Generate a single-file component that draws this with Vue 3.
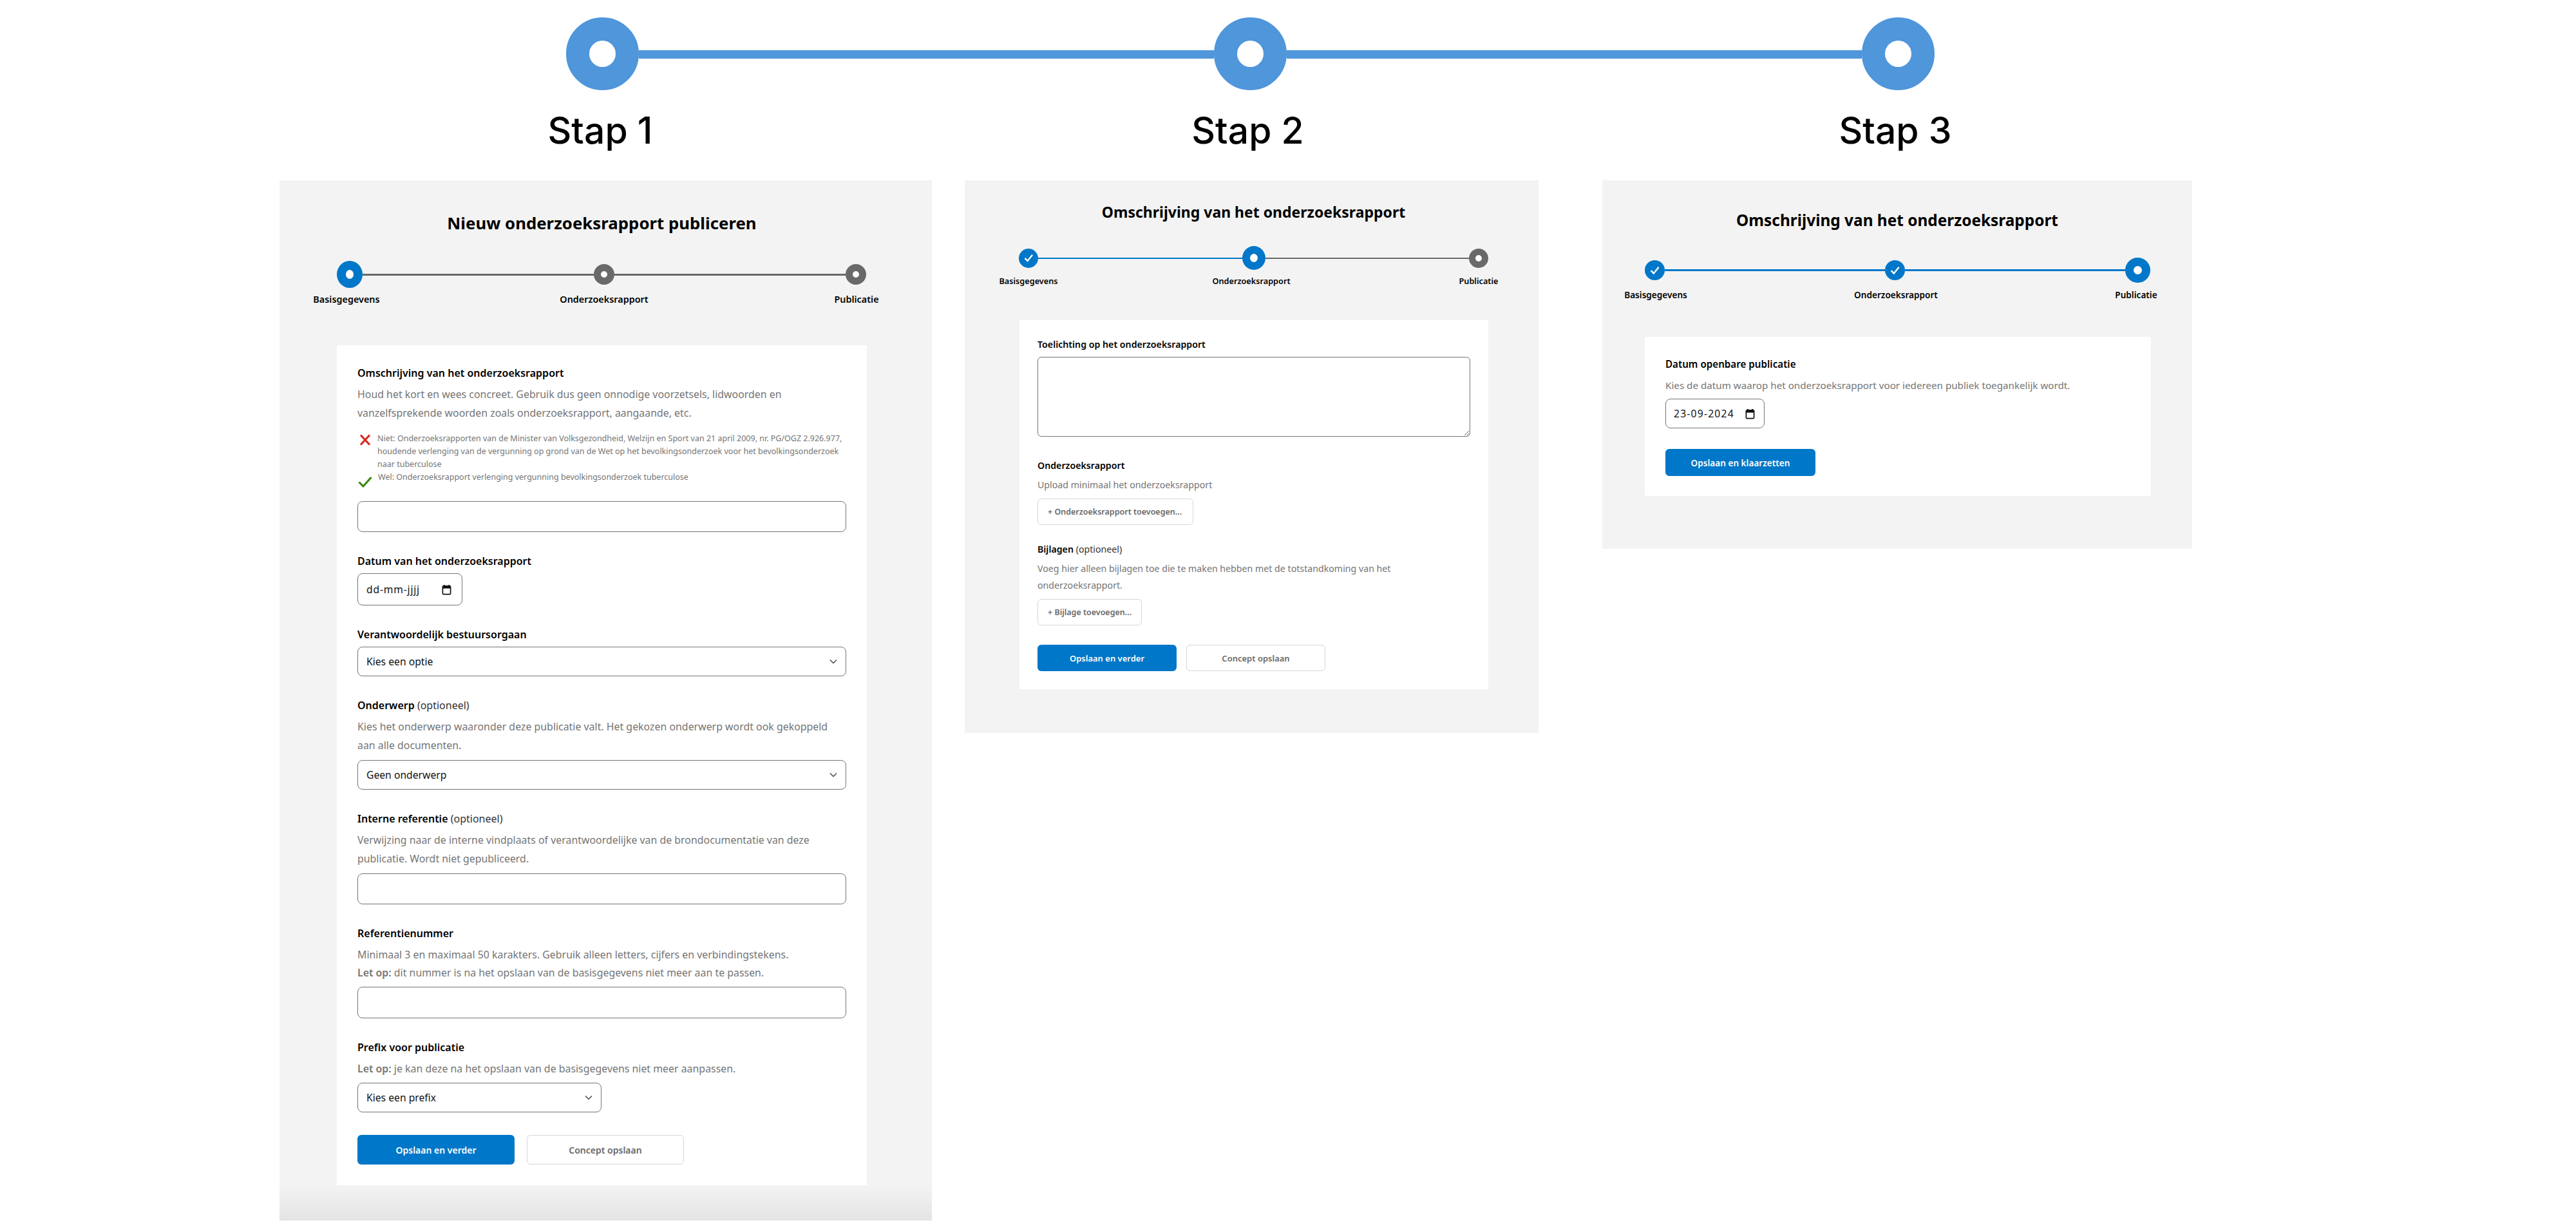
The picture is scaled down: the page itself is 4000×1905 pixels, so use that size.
<script setup>
const top = ['Stap 1', 'Stap 2', 'Stap 3']
</script>

<template>
  <div class="page">
    <header class="overview">
      <div class="track">
        <template v-for="(s, i) in top" :key="s">
          <span class="big-dot"></span>
          <span v-if="i < 2" class="big-line"></span>
        </template>
      </div>
      <div class="track-labels">
        <span v-for="s in top" :key="s" class="big-label">{{ s }}</span>
      </div>
    </header>

    <main class="panels">
      <!-- Stap 1 -->
      <section class="panel p1">
        <h1>Nieuw onderzoeksrapport publiceren</h1>
        <div class="steps">
          <span class="dot active"></span><span class="line"></span>
          <span class="dot todo"></span><span class="line"></span>
          <span class="dot todo"></span>
        </div>
        <div class="step-labels">
          <span>Basisgegevens</span><span>Onderzoeksrapport</span><span>Publicatie</span>
        </div>
        <div class="card">
          <div class="field first">
            <label>Omschrijving van het onderzoeksrapport</label>
            <p class="desc">Houd het kort en wees concreet. Gebruik dus geen onnodige voorzetsels, lidwoorden en<br>vanzelfsprekende woorden zoals onderzoeksrapport, aangaande, etc.</p>
            <div class="example niet">
              <svg viewBox="0 0 18 18" width="18" height="18"><path d="M2 1.5 16 16.5M16 1.5 2 16.5" fill="none" stroke="#d52b1e" stroke-width="3.2"/></svg>
              <span>Niet: Onderzoeksrapporten van de Minister van Volksgezondheid, Welzijn en Sport van 21 april 2009, nr. PG/OGZ 2.926.977,<br>houdende verlenging van de vergunning op grond van de Wet op het bevolkingsonderzoek voor het bevolkingsonderzoek<br>naar tuberculose</span>
            </div>
            <div class="example wel">
              <svg viewBox="0 0 22 18" width="22" height="18"><path d="M1.5 9.5 8 16 20.5 2" fill="none" stroke="#39870c" stroke-width="3"/></svg>
              <span>Wel: Onderzoeksrapport verlenging vergunning bevolkingsonderzoek tuberculose</span>
            </div>
            <input class="input omschr" type="text" />
          </div>
          <div class="field">
            <label>Datum van het onderzoeksrapport</label>
            <div class="date d1">
              <span>dd-mm-jjjj</span>
              <svg viewBox="0 0 16 18" width="15" height="17"><path d="M4 1v3M12 1v3" stroke="#111" stroke-width="2"/><rect x="1.5" y="3" width="13" height="13.5" rx="1.5" fill="none" stroke="#111" stroke-width="1.8"/><rect x="1.5" y="3" width="13" height="4" fill="#111"/></svg>
            </div>
          </div>
          <div class="field">
            <label>Verantwoordelijk bestuursorgaan</label>
            <div class="select">
              <span>Kies een optie</span>
              <svg viewBox="0 0 12 8" width="12" height="8"><path d="M1 1.5 6 6.5 11 1.5" fill="none" stroke="#444" stroke-width="1.4"/></svg>
            </div>
          </div>
          <div class="field">
            <label>Onderwerp <em>(optioneel)</em></label>
            <p class="desc">Kies het onderwerp waaronder deze publicatie valt. Het gekozen onderwerp wordt ook gekoppeld<br>aan alle documenten.</p>
            <div class="select after-desc">
              <span>Geen onderwerp</span>
              <svg viewBox="0 0 12 8" width="12" height="8"><path d="M1 1.5 6 6.5 11 1.5" fill="none" stroke="#444" stroke-width="1.4"/></svg>
            </div>
          </div>
          <div class="field">
            <label>Interne referentie <em>(optioneel)</em></label>
            <p class="desc">Verwijzing naar de interne vindplaats of verantwoordelijke van de brondocumentatie van deze<br>publicatie. Wordt niet gepubliceerd.</p>
            <input class="input after-desc" type="text" />
          </div>
          <div class="field">
            <label>Referentienummer</label>
            <p class="desc tight">Minimaal 3 en maximaal 50 karakters. Gebruik alleen letters, cijfers en verbindingstekens.<br><b>Let op:</b> dit nummer is na het opslaan van de basisgegevens niet meer aan te passen.</p>
            <input class="input after-desc tall" type="text" />
          </div>
          <div class="field">
            <label>Prefix voor publicatie</label>
            <p class="desc tight"><b>Let op:</b> je kan deze na het opslaan van de basisgegevens niet meer aanpassen.</p>
            <div class="select after-desc narrow">
              <span>Kies een prefix</span>
              <svg viewBox="0 0 12 8" width="12" height="8"><path d="M1 1.5 6 6.5 11 1.5" fill="none" stroke="#444" stroke-width="1.4"/></svg>
            </div>
          </div>
          <div class="actions">
            <button class="btn primary">Opslaan en verder</button>
            <button class="btn secondary">Concept opslaan</button>
          </div>
        </div>
        <div class="fade"></div>
      </section>

      <!-- Stap 2 -->
      <section class="panel p2">
        <h1>Omschrijving van het onderzoeksrapport</h1>
        <div class="steps">
          <span class="dot done"><svg viewBox="0 0 16 16"><path d="M3 8.5 6.5 12 13 4" fill="none" stroke="#fff" stroke-width="2"/></svg></span><span class="line blue"></span>
          <span class="dot active"></span><span class="line"></span>
          <span class="dot todo"></span>
        </div>
        <div class="step-labels">
          <span>Basisgegevens</span><span>Onderzoeksrapport</span><span>Publicatie</span>
        </div>
        <div class="card">
          <div class="field first">
            <label>Toelichting op het onderzoeksrapport</label>
            <textarea class="area"></textarea>
          </div>
          <div class="field">
            <label>Onderzoeksrapport</label>
            <p class="desc">Upload minimaal het onderzoeksrapport</p>
            <button class="btn add w1">+ Onderzoeksrapport toevoegen...</button>
          </div>
          <div class="field f3">
            <label>Bijlagen <em>(optioneel)</em></label>
            <p class="desc">Voeg hier alleen bijlagen toe die te maken hebben met de totstandkoming van het<br>onderzoeksrapport.</p>
            <button class="btn add w2">+ Bijlage toevoegen...</button>
          </div>
          <div class="actions">
            <button class="btn primary">Opslaan en verder</button>
            <button class="btn secondary">Concept opslaan</button>
          </div>
        </div>
      </section>

      <!-- Stap 3 -->
      <section class="panel p3">
        <h1>Omschrijving van het onderzoeksrapport</h1>
        <div class="steps">
          <span class="dot done"><svg viewBox="0 0 16 16"><path d="M3 8.5 6.5 12 13 4" fill="none" stroke="#fff" stroke-width="2"/></svg></span><span class="line blue"></span>
          <span class="dot done"><svg viewBox="0 0 16 16"><path d="M3 8.5 6.5 12 13 4" fill="none" stroke="#fff" stroke-width="2"/></svg></span><span class="line blue"></span>
          <span class="dot active"></span>
        </div>
        <div class="step-labels">
          <span>Basisgegevens</span><span>Onderzoeksrapport</span><span>Publicatie</span>
        </div>
        <div class="card">
          <div class="field first">
            <label>Datum openbare publicatie</label>
            <p class="desc">Kies de datum waarop het onderzoeksrapport voor iedereen publiek toegankelijk wordt.</p>
            <div class="date d3">
              <span>23-09-2024</span>
              <svg viewBox="0 0 16 18" width="15" height="17"><path d="M4 1v3M12 1v3" stroke="#111" stroke-width="2"/><rect x="1.5" y="3" width="13" height="13.5" rx="1.5" fill="none" stroke="#111" stroke-width="1.8"/><rect x="1.5" y="3" width="13" height="4" fill="#111"/></svg>
            </div>
          </div>
          <div class="actions">
            <button class="btn primary">Opslaan en klaarzetten</button>
          </div>
        </div>
      </section>
    </main>
  </div>
</template>

<style>
html, body { margin: 0; background: #fff; }
</style>

<style scoped>
.page {
  width: 4000px;
  height: 1905px;
  overflow: hidden;
  background: #fff;
  font-family: "Noto Sans", "Open Sans", sans-serif;
  color: #000;
}

/* overview stepper */
.overview { height: 280px; box-sizing: border-box; padding-top: 27px; }
.track { display: flex; align-items: center; margin-left: 879px; }
.big-dot {
  width: 41px; height: 41px;
  border: 36px solid #4f96db;
  border-radius: 50%;
  background: #fff;
  flex: none;
}
.big-line { width: 893px; height: 13px; margin-top: 2px; background: #4f96db; flex: none; }
.track-labels { display: flex; margin-left: 782px; margin-top: 25px; }
.big-label {
  width: 300px;
  margin-right: 705.5px;
  text-align: center;
  font-family: Inter, sans-serif;
  font-size: 57px;
  font-weight: 500;
  line-height: 76px;
  flex: none;
}

/* panels */
.panels { display: flex; align-items: flex-start; padding-left: 434px; }
.panel { background: #f3f3f3; flex: none; box-sizing: border-box; position: relative; }
.panel h1 { margin: 0; text-align: center; font-weight: 700; }

.steps { display: flex; align-items: center; }
.dot {
  border-radius: 50%;
  display: flex; align-items: center; justify-content: center;
  flex: none;
  box-sizing: border-box;
  background: #fff;
}
.dot.done { background: #0077c8; }
.dot.done svg { width: 62%; height: 62%; }
.dot.active { border-style: solid; border-color: #0077c8; }
.dot.todo { border-style: solid; border-color: #696969; }
.line { flex: 1; height: 2px; background: #696969; }
.line.blue { background: #0077c8; }
.step-labels { display: flex; font-weight: 600; }
.step-labels span { text-align: center; flex: none; width: 160px; white-space: nowrap; }

.card { background: #fff; box-sizing: border-box; }
.field label { display: block; font-weight: 600; white-space: nowrap; }
.field label em { font-style: normal; font-weight: 400; color: #333; }
.desc { margin: 0; color: #757575; white-space: nowrap; }
.desc b { font-weight: 600; }
.example { display: flex; color: #757575; white-space: nowrap; }
.example.wel { height: 20px; }

.input, .select, .date, .area {
  display: flex;
  align-items: center;
  box-sizing: border-box;
  background: #fff;
  border: 1.5px solid #757575;
  border-radius: 8px;
  outline: none;
  padding: 0;
  margin: 0;
  color: #111;
}
.input { width: 100%; }
.select { width: 100%; justify-content: space-between; }
.date { justify-content: space-between; }
.area { display: block; width: 100%; border-radius: 6px; }

.actions { display: flex; }
.btn {
  font-family: inherit;
  font-weight: 600;
  box-sizing: border-box;
  padding: 0;
  flex: none;
  border-radius: 6px;
  background: #fff;
  white-space: nowrap;
}
.btn.primary { background: #0077c8; border: 0; color: #fff; }
.btn.secondary, .btn.add { border: 1.5px solid #d3d6de; color: #696969; }
.btn.add { display: block; text-align: left; }

/* Panel 1 */
.p1 { width: 1013px; height: 1615px; padding-top: 46px; }
.p1 h1 { font-size: 25.8px; line-height: 40px; padding-right: 12px; }
.p1 .steps { margin: 39px 102px 0 89px; height: 42px; }
.p1 .dot { width: 32px; height: 32px; border-width: 11px; }
.p1 .dot.active { width: 40px; height: 42px; border-width: 14px; }
.p1 .line { height: 3px; }
.p1 .step-labels { margin: 8px 0 0 24px; font-size: 14.4px; line-height: 20px; }
.p1 .step-labels span:nth-child(2) { margin-left: 240px; }
.p1 .step-labels span:nth-child(3) { margin-left: 232px; }
.p1 .card { margin: 61px 0 0 89px; width: 823px; height: 1304px; padding: 30px 32px 0; }
.p1 label { font-size: 16px; line-height: 26px; }
.p1 .field { margin-top: 32px; }
.p1 .field.first { margin-top: 0; }
.p1 .desc { margin-top: 6px; font-size: 15.9px; line-height: 29px; }
.p1 .desc.tight { line-height: 28px; }
.p1 .example { font-size: 12.5px; line-height: 20px; }
.p1 .example svg { flex: none; margin: 3px 10px 0 3px; }
.p1 .example.niet { margin-top: 15px; }
.p1 .example.wel svg { margin: 8px 9px 0 1px; }
.p1 .input { height: 48px; margin-top: 8px; }
.p1 .input.omschr { margin-top: 27px; }
.p1 .input.tall { height: 49px; }
.p1 .select { height: 46px; margin-top: 6px; padding: 0 13px; font-size: 15.7px; }
.p1 .select.after-desc { margin-top: 8px; }
.p1 .select.narrow { width: 379px; }
.p1 .date.d1 { width: 163px; height: 50px; margin-top: 6px; padding: 0 16px 0 13px; font-size: 15.7px; letter-spacing: 0.8px; }
.p1 .actions { margin-top: 35px; gap: 19px; align-items: center; }
.p1 .btn { width: 244px; height: 46px; font-size: 14px; }
.fade {
  position: absolute; left: 0; right: 0; bottom: 0; height: 54px;
  background: linear-gradient(#f3f3f3, #e4e4e4);
  z-index: 0;
}

/* Panel 2 */
.p2 { width: 891px; height: 858px; margin-left: 51px; padding-top: 29px; }
.p2 h1 { font-size: 23px; line-height: 40px; padding-left: 6px; }
.p2 .steps { margin: 33px 78px 0 84px; height: 37px; }
.p2 .dot { width: 30px; height: 30px; border-width: 10px; }
.p2 .dot.active { width: 36px; height: 37px; border-width: 12px; }
.p2 .step-labels { margin: 8px 0 0 19px; font-size: 12.7px; line-height: 18px; }
.p2 .step-labels span:nth-child(2) { margin-left: 186px; }
.p2 .step-labels span:nth-child(3) { margin-left: 193px; }
.p2 .card { margin: 52px 0 0 85px; width: 728px; height: 573px; padding: 27px 28px 0; }
.p2 label { font-size: 14.2px; line-height: 22px; }
.p2 .field { margin-top: 34px; }
.p2 .field.first { margin-top: 0; }
.p2 .field.f3 { margin-top: 27px; }
.p2 .desc { margin-top: 6px; font-size: 14.2px; line-height: 26px; }
.p2 .area { height: 124px; margin-top: 8px; }
.p2 .btn.add { height: 41px; margin-top: 8px; padding-left: 15px; font-size: 12.5px; }
.p2 .w1 { width: 242px; }
.p2 .w2 { width: 162px; }
.p2 .actions { margin-top: 30px; gap: 15px; }
.p2 .actions .btn { width: 216px; height: 41px; font-size: 13px; }

/* Panel 3 */
.p3 { width: 916px; height: 572px; margin-left: 99px; padding-top: 41px; }
.p3 h1 { font-size: 24.4px; line-height: 42px; }
.p3 .steps { margin: 37px 65px 0 66px; height: 39px; }
.p3 .dot { width: 31px; height: 31px; border-width: 10px; }
.p3 .dot.active { width: 39px; height: 39px; border-width: 13px; }
.p3 .line { height: 3px; }
.p3 .step-labels { margin: 9px 0 0 3px; font-size: 13.6px; line-height: 20px; }
.p3 .step-labels span:nth-child(2) { margin-left: 213px; }
.p3 .step-labels span:nth-child(3) { margin-left: 213px; }
.p3 .card { margin: 55px 0 0 66px; width: 786px; height: 247px; padding: 30px 32px 0; }
.p3 label { font-size: 15.2px; line-height: 24px; }
.p3 .desc { margin-top: 8px; font-size: 15.2px; line-height: 26px; }
.p3 .date.d3 { width: 154px; height: 46px; margin-top: 8px; padding: 0 14px 0 12px; font-size: 15.7px; letter-spacing: 1.2px; }
.p3 .actions { margin-top: 32px; }
.p3 .btn { width: 233px; height: 42px; font-size: 13.6px; }
</style>
